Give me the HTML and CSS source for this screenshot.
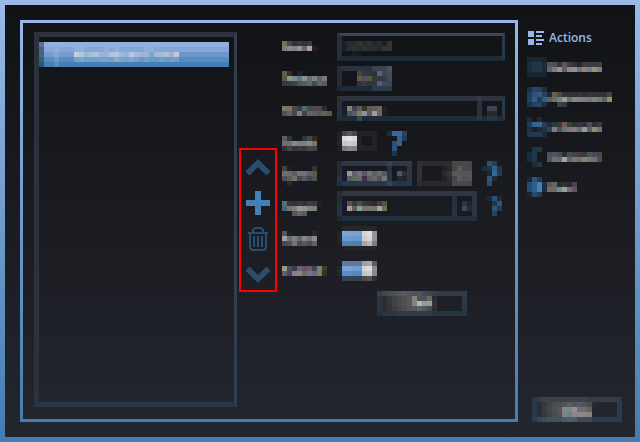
FILE: index.html
```html
<!DOCTYPE html>
<html lang="en">
<head>
<meta charset="utf-8">
<meta name="viewport" content="width=device-width, initial-scale=1">
<title>Actions</title>
<link rel="stylesheet" href="styles.css">
</head>
<body>
<div class="window">
  <main class="panel">
    <div class="list">
      <button class="list-item" aria-label="Selected item"><svg class="px" data-px="5e7190 93b0de*37/4c6383 86a9da*2 8eaddc 84a7d8*3 93b1d8*2 84a7d8*4 93b1d8 84a7d8 93b1d8 84a7d8*5 8fb0d8*2 84a7d8*15/486281 749ccf*2 85a6d2 749ccf*3 c0cee3 acc9df 95bad4 a8bed9 afc1dc 9ab3d7*2 b2c4df*2 9fb8da 8cb5e0 b6c5e0 a6b9dc 9fb4d8*2 72a8d7 9fbcd5 98bfd5 b0bedc 9eb6d6 c0c9df 6b98c8*10/3c5c80 5a8bc0*2 6d98c8 5a8bc0*3 78a1c6 82a8c9 729fcb*3 779fca*2 72a0c6 8aabca 879fc5 7a9dc4 8aa5ca 789fc6 6598c5 6f9fc8 679bc5 6598c5 759fc4 679bc5 7a9fc4 749cc5 5a8bc0*10/315476 447fb5*2 5a8cbb 447fb5*34"></svg></button>
    </div>
    <div class="tools">
      <button aria-label="Move up"><svg width="24" height="24" viewBox="0 0 24 24"><path fill="#2c4c6c" d="M12 4 24 16v1l-3 3h-1l-8-8-8 8H3l-3-3v-1z"/></svg></button>
      <button aria-label="Add"><svg width="24" height="24" viewBox="0 0 24 24"><path fill="#4480b5" d="M9 0h6v9h9v6h-9v9H9v-9H0V9h9z"/></svg></button>
      <button aria-label="Delete"><svg width="24" height="24" viewBox="0 0 24 24" fill="none" stroke="#2c4c6c" stroke-width="2"><path d="M2 6h20M7 6V3l2-2h6l2 2v3M4 6v15l2 2h12l2-2V6M8 9v11M12 9v11M16 9v11"/></svg></button>
      <button aria-label="Move down"><svg width="24" height="24" viewBox="0 0 24 24"><path fill="#2c4c6c" d="M12 20 0 8V7l3-3h1l8 8 8-8h1l3 3v1z"/></svg></button>
    </div>
    <form class="form">
      <label for="f1" aria-label="Name"><svg class="px" data-px="./776f60 4a4458 303134 3a3a38 313235 3a3a3a/7c7d75 8a8795 8d7f88 8a9894 6a6470 a5a2a7 2a1b1c"></svg></label>
      <div class="row end"><span class="control wide tall"><input id="f1" class="field" type="text"><svg class="px over low" data-px=". 17202a 2b2b2c*2 333436 26292e 303234 25282e 2c2d33 1e1e29 343334/. 17202a 2b2c2d 29333a 2b2b2c 2c3437 292b2d 2e2f31 26282b 353334*2/.*3 1b1c1f 17191c"></svg></span></div>

      <label for="f2" aria-label="Distance"><svg class="px" data-px="5c5e5e 352f2c . 1d232a/5c5747 8e9684 7a8795 5e7980 819895 6c6d6b 81827e 526a68 847870/39383a 3d3b38 414047 4e5750 5d5663 616768 3d4b5a 5e6662 5d5964"></svg></label>
      <div class="row"><span class="control spin"><input id="f2" class="field" type="text"><svg class="px over" data-px="252c36 2d333e*6 3a4352*3 4a5362/252c36 .*3 454641 34353a 343630 313235 506487 3a4557 434c5d/252c36 .*3 5a5d44 5c4a60 4c5a43 37383b*3 404b60/252c36 .*3 34373a 393a3d 32352f 34363c 4b6080 3e4a61 3b485c/1e2730 1e2b38*6 2c3b4e*4"></svg></span></div>

      <label for="f3" aria-label="Direction"><svg class="px" data-px="./7d776e 7c7165 494a4b 3d3d3e 546a70 4b4b49 4d4c43 48485a 2a2b2b/524f4d 64625d 464849 7b7d80 414447 62625f 5f6067 58594c 62615a 585848"></svg></label>
      <div class="row"><span class="control wide"><select id="f3" class="field"></select><svg class="px over" data-px=".*28 323947/.*28 29303c/. 17202e 877e76 414354 5d604c 34352e 5e5b56 605e57 68665a 251d1a .*18 29303c . 3c4454*2/. 17202e 4b5058 5d5b70 7b8262 8d9193 5b5b58 a09c9d 67686b 211c1b .*18 29303c . 252a32*2/.*4 354751 .*23 293744 . 263642*2"></svg></span></div>

      <label for="f4" aria-label="Enable"><svg class="px" data-px="625d5c 343437 . . 30343a 3b4a52 332b21/657277 597776 91858d 7b7d93 7d836e 738f94 867054/313335 444546 343437 3b3b3d 37383a 46484b 414349"></svg></label>
      <div class="row"><span class="control toggle"><input id="f4" type="checkbox"><svg class="px over" data-px="1d1f23 444547 57585a 49494b 222326*4/222427 dcdcdc e3e3e3 dcdcdc 222326 . . 222326/222427 c5c6c7 cdcdcd c8c8c8 222326 . . 222326/1d1f23 77787a 88898b 818284 222326*4"></svg></span>
        <svg class="px" data-px="1b2a38 386b9c*2 28435c/. . 30608c 243b50/. 2b4f70 34618b/. 2c5275/. 20374b"></svg></div>

      <label for="f5" aria-label="Speed"><svg class="px" data-px="3e4042 1d2023 . . . . 323334/746b66 6d6c6c 5c5d60 737371 73736b 52627a 66573f/4d4f50 5c5e56 737068 464850 56595b 3b4859 545147/. 292a2b"></svg></label>
      <div class="row"><span class="control mid"><select id="f5" class="field"></select><svg class="px over" data-px="252c36 303845*9 394350 303845*4/252c36 .*9 2a323d . . . 2b3541/252c36 191931 a0948a 5c5f7a 71736c 5e536c 6a7376 685a56 62706c 4d5c61 27364a . 4b5770 282e3a 2a3746/27333f 191931 585d5d 616965 666c5e 402d4e 5c5e5c 666567 555158 71796d 26394a . 25282e 202329 29394a/22303d 25384b*9 2f475c 25384b*4"></svg></span>
        <span class="control spin muted"><input class="field" type="text" aria-label="Speed value"><svg class="px over" data-px="303133 2c2d2f*6 49494a*3 444547/303133 .*4 202123 29292b 444547 5a5a5b 484849 4a4a4b/303133 .*4 29292b 36363a 58595a 545556*3/303133 .*4 202123 2d2d2f 444547 5a5a5b 515152 555556/2c2d2f 292a2c*6 49494a*3 444547"></svg></span>
        <svg class="px" data-px=". 2b537a 253f57/1b2c3b 20344a 2f5f8e 20374b/. 1c2833 386a98 243d54/. 2c577e 1e2d3a/. 294e71"></svg></div>

      <label for="f6" aria-label="Trigger"><svg class="px" data-px="./5d6c74 343537 303234 37393d 303438 3a3c3d 3b3a3c 222226/49637a 78746d 7d7e76 8f9aab 988d8a 7a8588 768177/. . 55575b 62656a 5b5b57"></svg></label>
      <div class="row"><span class="control long"><select id="f6" class="field"></select><svg class="px over" data-px="252c36 303743*27/252c36 .*22 26323f .*3 2a3643/252c36 191931 59524c 363d33 4d503a 373a3c 303238 332633 403e41 545442 .*13 26323f . 30343f 23272d 2a3643/27333f 191931 ad9c91 6a585f 7da0a0 77736d 737871 72746b a5a3a4 6c6f50 .*13 26323f . 404a5c 252b36 2a3643/25323f .*22 26323f .*3 2a3643/1c2832 22303d*27"></svg></span>
        <svg class="px gap" data-px="./1b2a36 2b5379 1c2a36/. 20374b 2d587e/. 2c577d 203a50/. 26415b"></svg></div>

      <label for="f7" aria-label="Repeat"><svg class="px" data-px="575a54 1e2225 . . . . 242a2d/9c9f9b 617275 807e84 596a76 8a858b 6d7487 95888b/46484c 525155 776f74 4d5052 55575a 484c58 6a5f58"></svg></label>
      <div class="row"><span class="control toggle"><input id="f7" type="checkbox" checked><svg class="px over" data-px=". 25272b*7/222529 80a3d7*2 7c9fd3*2 d4d4d4 dedede 929395/222529 6d99d0*2 6797cb*2 cccccc d5d5d5 929395/1f2226 5280b1*2 4d7fb1*2 a6a7a9 b5b6b8 7c7d80/. 212327*7"></svg></span></div>

      <label for="f8" aria-label="Enabled"><svg class="px" data-px="9f9b81 48505f 3c3c40 66638b 6b5355 6b5a7a 47444c 6b8286 423b25/685e58 513f70 898482 87868f 76675f 70739b 6d6a7c 777e6f 37301f"></svg></label>
      <div class="row"><span class="control toggle"><input id="f8" type="checkbox" checked><svg class="px over" data-px=". 637895*4 9c9fa3 a8a9aa 5a5c60/25282d 78a3d7*2 6c9cd2*2 d3d3d3 dddddd 8c8d90/25282d 5a8dc4*2 5788bc*2 c4c5c6 cccccc 88898c/. 314254*4 484b50 505256 2d3035"></svg></span></div>

      <div class="row submit"><button class="button" type="button" aria-label="Test"><svg class="px" data-px="363d4a 414751 464c54 4c5158 51565e 555a62 51565e 4c515b 4f545c 444a54 414751 383e4a 333b49*6/2b3541 2c2d30 35363a 414244 4a4a4d 505153 57575a 858477 4f5257 4e5254 65685f 2b2b2e . . . . . 2a3848/2b3541 2c2d30 35363a 414244 4a4a4d 505153 57575a 818681 a6b5bd 909aa7 9b9d8d 343236 . . . . . 2a3848/293745 2c2d30 343538 3d3d40 464649 4c4d50 535457 55585b 596467 50585b 484a4b 2c2d30 . . . . . 283847/223242 283746*3 2d3b48*7 263544*7"></svg></button></div>
    </form>
  </main>
  <aside class="side">
    <h2><svg width="16" height="16" viewBox="0 0 16 16" fill="#9ab8e7"><path d="M0 1h6v6H0zM0 9h6v6H0zM8 1h8v2H8zM8 5h6v2H8zM8 9h8v2H8zM8 13h6v2H8z"/></svg>Actions</h2>
    <nav>
      <a href="#a1" aria-label="Action 1"><svg class="px" data-px="192632*4/1b2c3b 20344a 22374b 1b2a3a 50535a 504e56 393638 60585f 3f3c40 313335 212a33 3c3b3e 393c43 363e43 3a403d/1b2c3b 20344a 22374b 1b2a3a 635e6c 7c7c7f 9b917e 665875 918c83 8f928b 697485 9b8071 727b89 9b8f76 718483/192632*4"></svg></a>
      <a href="#a2" aria-label="Action 2"><svg class="px" data-px="1c3142 264463 28435e 1d3142/243e59 2b547a 315b85 26425e 202a3e 735b4b 4d4b48 363338 343234 2f3031 37333a 2a3036 3a3437 31343a 343434 34312f 414343/26405a 315b82 243b50 335d85 56605e 746c6a 62868d 9f9690 64736f 87877d 71829a 8b7869 6b7890 7f8570 6a7b8b 57645c 9b896f/1f3244 26405b 29445d 1c2d3e . . 35434b 35373c"></svg></a>
      <a href="#a3" aria-label="Action 3"><svg class="px" data-px="1c2a36 . 1c2a36/223c54 33618c 346894 243e58 202a38 2c3841 343b46 775747 34413c 2f3032 37343d 303338 514961 2e2f38 363a38/1c2e3f 182027 202a33 1e3547 364249 797b8a 4c525e 6b7070 81787d 8a7c75 646c83 939b99 62597b 958b75 61797a/20374d 213b53 233a50 1a2c3b"></svg></a>
      <a href="#a4" aria-label="Action 4"><svg class="px" data-px=". 1f3446 20374a/1b2c3b 20374a . . 534c4f 4c5666 56494f 2b3035 424e54 44453a 4b3b32 343b45 4c5557 424b59 50453f/1b2c3b 20374a . . 515462 6c7178 6a6c70 a2a7a5 626567 7b7480 647574 8c7f6d 757b6e 746d7a 5b4a4a/. 1c2c3a 20374a"></svg></a>
      <a href="#a5" aria-label="Action 5"><svg class="px" data-px="1b2733 29567c 223b52/264c6c 305e88 4280b8 222e42 68554b 576b6c 282d32 2c3435 282d32 553d50/264c6c 305e88 4280b8 222e42 6e6b68 756866 728b90 9fa095 72706e 5e526d/1a2733 27496a 203b52"></svg></a>
    </nav>
    <button class="button close" aria-label="Close"><svg class="px" data-px="2d3442 343b47 3b424c*9 353d4a*6 2f3947/2b3847 2b2d31 37383b 424346 4a4b4d 4d4e50 545557 5d5d61 525458 5a5659 535258 494a4c 292a2e . . . . 2d3a4a/2b3847 2b2d31 3b3c3f 474749 4f5051 545556 82848d 7a8790 9c8f91 696e7f 6e6e70 64605e . . . . . 2d3a4a/2b3847 2c2e34 37383b 434446 4a4b4d 515255 80838c 70818c 958487 8d8790 848692 8f8275 . . . . . 2d3a4a/293c50 33475a 394b5d 41505f 43515f*2 4b5b6a*3 3c4b5c*3 2a3b4e*6"></svg></button>
  </aside>
</div>
<script src="script.js"></script>
</body>
</html>
```

FILE: styles.css
```css
* { box-sizing: border-box; }
html, body { height: 100%; }
body {
  margin: 0;
  padding: 5px;
  background: linear-gradient(#9bb9e6, #437db2);
  font-family: "Open Sans", "Noto Sans", sans-serif;
}
button {
  display: block;
  padding: 0;
  border: 0;
  background: none;
  cursor: pointer;
}
svg { display: block; flex: none; }
.px { shape-rendering: crispEdges; }
.window {
  display: flex;
  gap: 9px;
  min-height: 100%;
  padding: 15px 13px 15px 15px;
  background: linear-gradient(#111215, #24262e);
}
.panel {
  flex: 1;
  display: flex;
  min-width: 0;
  padding: 8px 10px 12px 11px;
  border: 3px solid;
  border-image: linear-gradient(#98b7e7, #437db2) 3;
}
.list {
  flex: 1;
  min-width: 0;
  margin-top: 1px;
  padding-top: 5px;
  border: solid;
  border-width: 5px 3px 5px 5px;
  border-color: #2d313c #303e50 #293644 #29323d;
}
.list-item {
  width: calc(100% - 5px);
  height: 25px;
  overflow: hidden;
  background: linear-gradient(#93b0de, #447fb5);
}
.tools {
  display: grid;
  gap: 12px;
  align-self: flex-start;
  margin: 117px 5px 0 2px;
  padding: 5px 5px 3px;
  border: 2px solid #f00;
}
.form {
  display: grid;
  grid-template-columns: 55px 168px;
  grid-template-rows: 30px 25px 30px 25px 25px 30px 30px 25px 25px;
  row-gap: 5px;
}
.form label { padding-top: 5px; }
.row { display: flex; align-items: flex-start; gap: 5px; }
.end { align-items: flex-end; }
.submit { grid-column: 2; padding-left: 40px; }
.control { position: relative; display: block; height: 25px; }
.wide { width: 100%; }
.tall { height: 28px; }
.spin { width: 55px; }
.mid { width: 75px; }
.long { width: 140px; height: 30px; }
.toggle { width: 40px; height: 20px; margin-right: 5px; }
.muted { margin-right: 5px; }
.gap { margin-left: 5px; }
.field, .toggle input {
  display: block;
  appearance: none;
  width: 100%;
  height: 100%;
  margin: 0;
  padding: 0;
  border: 0;
  border-radius: 0;
  background: none;
}
.wide .field {
  border: solid;
  border-width: 5px 3px 5px 5px;
  border-color: #2e343f #2a394c #1e2b38 #272f3a;
}
.tall .field { border-width: 3px 3px 5px 5px; border-top-color: #3b485b; }
.over { position: absolute; left: 0; top: 0; pointer-events: none; }
.low { top: 8px; }
.side { flex: none; width: 95px; display: flex; flex-direction: column; }
.side h2 {
  display: flex;
  align-items: center;
  gap: 5px;
  height: 16px;
  margin: 10px 0 11px 1px;
  color: #9ab8e7;
  font-size: 12px;
  font-weight: 600;
  line-height: 16px;
}
.side nav { display: grid; gap: 10px; }
.side a { display: block; height: 20px; }
.close { margin: auto 0 0 5px; }
```

FILE: script.js
```js
// Draws colour-cell grids: rows split by "/", cells by spaces, "." is empty, "*n" repeats.
const CELL = 5;
document.querySelectorAll("svg[data-px]").forEach((svg) => {
  let width = 0;
  const rows = svg.dataset.px.split("/");
  rows.forEach((row, y) => {
    let x = 0;
    row.trim().split(/\s+/).forEach((item) => {
      const [color, times] = item.split("*");
      const count = Number(times || 1);
      if (color !== ".") {
        const rect = document.createElementNS("http://www.w3.org/2000/svg", "rect");
        rect.setAttribute("x", x * CELL);
        rect.setAttribute("y", y * CELL);
        rect.setAttribute("width", count * CELL);
        rect.setAttribute("height", CELL);
        rect.setAttribute("fill", "#" + color);
        svg.appendChild(rect);
      }
      x += count;
    });
    width = Math.max(width, x);
  });
  svg.setAttribute("width", width * CELL);
  svg.setAttribute("height", rows.length * CELL);
});
```
